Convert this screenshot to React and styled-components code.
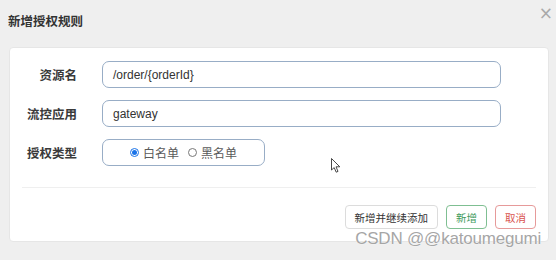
import React from "react";
import styled, { createGlobalStyle } from "styled-components";

const Global = createGlobalStyle`
  html, body { margin: 0; padding: 0; background: #efefef; }
  body { font-family: "Liberation Sans", "Noto Sans CJK SC", sans-serif; }
  * { box-sizing: border-box; }
`;

const Modal = styled.div`
  position: relative;
  width: 556px;
  height: 260px;
  background: #efefef;
  display: flex;
  flex-direction: column;
  overflow: hidden;
`;

const Header = styled.div`
  height: 47px;
  display: flex;
  align-items: flex-start;
  justify-content: space-between;
  padding: 14px 3px 0 8px;
`;

const Title = styled.div`
  font-size: 12.5px;
  font-weight: bold;
  color: #333;
  line-height: 16px;
`;

const Close = styled.div`
  margin-top: -9px;
  font-size: 17px;
  line-height: 17px;
  color: #a9a9a9;
  font-family: "DejaVu Sans", sans-serif;
`;

const Card = styled.div`
  position: relative;
  margin: 0 7px 0 9px;
  height: 195px;
  background: #fff;
  border: 1px solid #e6e6e6;
  border-radius: 4px;
  padding-top: 13px;
  display: flex;
  flex-direction: column;
`;

const Form = styled.div`
  display: grid;
  grid-template-columns: 67px auto;
  column-gap: 25px;
  row-gap: 12px;
  justify-content: start;
  align-items: center;
`;

const Label = styled.div`
  text-align: right;
  font-size: 12.5px;
  font-weight: bold;
  color: #3a3a3a;
`;

const Field = styled.div`
  height: 27px;
  width: ${(p) => p.$w}px;
  border: 1px solid #98adc6;
  border-radius: 7px;
  display: flex;
  align-items: center;
  justify-content: ${(p) => (p.$center ? "center" : "flex-start")};
  padding: 0 10px;
  font-size: 12px;
  color: #333;
  gap: 9px;
`;

const RadioOption = styled.label`
  display: flex;
  align-items: center;
  gap: 4px;
  font-size: 12px;
  color: #5a5a5a;
`;

const RadioDot = styled.span`
  width: 9px;
  height: 9px;
  border-radius: 50%;
  border: 1px solid ${(p) => (p.$on ? "#1a73e8" : "#777")};
  display: flex;
  align-items: center;
  justify-content: center;
  &::after {
    content: "";
    width: 5px;
    height: 5px;
    border-radius: 50%;
    background: ${(p) => (p.$on ? "#1a73e8" : "transparent")};
  }
`;

const Divider = styled.div`
  margin: 21px 12px 0 12px;
  height: 1px;
  background: #efefef;
`;

const Actions = styled.div`
  display: flex;
  justify-content: flex-end;
  gap: 8px;
  margin: 17px 12px 0 0;
`;

const Button = styled.div`
  height: 24px;
  padding: 0 ${(p) => (p.$wide ? 9 : 9)}px;
  min-width: 41px;
  border: 1px solid ${(p) => p.$border};
  border-radius: 4px;
  color: ${(p) => p.$color};
  background: #fff;
  font-size: 10.5px;
  display: flex;
  align-items: center;
  justify-content: center;
`;

const Cursor = styled.svg`
  position: absolute;
  left: 321px;
  top: 110px;
`;

const Watermark = styled.div`
  position: absolute;
  right: 15px;
  top: 230px;
  font-size: 17px;
  line-height: 17px;
  letter-spacing: -0.2px;
  color: #a6a6a6;
  text-shadow: 0 0 1px #fff, 0 0 1px #fff;
`;

export default function App() {
  return (
    <Modal>
      <Global />
      <Header>
        <Title>新增授权规则</Title>
        <Close>×</Close>
      </Header>
      <Card>
        <Form>
          <Label>资源名</Label>
          <Field $w={399}>/order/{"{orderId}"}</Field>
          <Label>流控应用</Label>
          <Field $w={399}>gateway</Field>
          <Label>授权类型</Label>
          <Field $w={163} $center>
            <RadioOption>
              <RadioDot $on />
              白名单
            </RadioOption>
            <RadioOption>
              <RadioDot />
              黑名单
            </RadioOption>
          </Field>
        </Form>
        <Divider />
        <Actions>
          <Button $wide $border="#dcdcdc" $color="#333">新增并继续添加</Button>
          <Button $border="#7fbf92" $color="#3f9a5c">新增</Button>
          <Button $border="#e69a9a" $color="#d9534f">取消</Button>
        </Actions>
        <Cursor width="10" height="16" viewBox="0 0 10 16">
          <path d="M0.5 0.5 L0.5 12 L3.2 9.6 L5.2 14.2 L7 13.4 L5 8.8 L8.8 8.8 Z" fill="#fff" stroke="#333" strokeWidth="0.9" />
        </Cursor>
      </Card>
      <Watermark>CSDN @@katoumegumi</Watermark>
    </Modal>
  );
}
